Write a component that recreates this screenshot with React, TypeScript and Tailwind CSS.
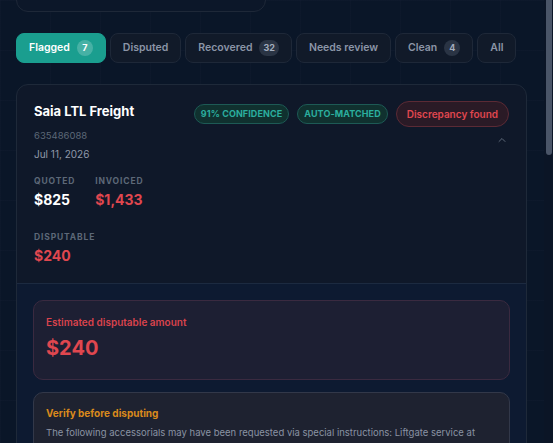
import { ChevronUp } from 'lucide-react'

const tabs = [
  { label: 'Flagged', count: '7', active: true },
  { label: 'Disputed' },
  { label: 'Recovered', count: '32' },
  { label: 'Needs review' },
  { label: 'Clean', count: '4' },
  { label: 'All' },
]

function Tab({ label, count, active }: { label: string; count?: string; active?: boolean }) {
  return (
    <button
      type="button"
      className={`flex h-[30px] items-center gap-[7px] rounded-[8px] border px-[12px] text-[10.5px] font-semibold ${
        active
          ? 'border-[#1a9e8f] bg-[#1a9e8f] text-white'
          : 'border-[#1e2838] bg-[#111a29] text-[#8b95a7]'
      }`}
    >
      {label}
      {count && (
        <span
          className={`flex h-[16px] min-w-[16px] items-center justify-center rounded-full px-[4px] text-[9px] font-bold ${
            active ? 'bg-white/20 text-white' : 'bg-[#2a3444] text-[#a3adbd]'
          }`}
        >
          {count}
        </span>
      )}
    </button>
  )
}

function Pill({ children }: { children: string }) {
  return (
    <span className="rounded-full border border-[#1d5a55] bg-[#10312f] px-[6px] py-[3px] text-[9px] font-bold leading-[12px] tracking-[0.01em] text-[#2bae9e]">
      {children}
    </span>
  )
}

export default function App() {
  return (
    <div
      className="relative h-[443px] overflow-hidden bg-[#0a1628] bg-[linear-gradient(rgba(148,163,184,0.022)_1px,transparent_1px),linear-gradient(90deg,rgba(148,163,184,0.022)_1px,transparent_1px)] bg-[size:50px_50px] text-white"
      style={{ fontFamily: 'Inter, "Noto Sans", sans-serif' }}
    >
      <div className="w-[527px] pl-4">
        <div className="-mt-8 h-[44px] w-[250px] rounded-[12px] border border-[#1e2838] bg-[#0c1729]" />

        <div className="mt-[21px] flex gap-[4px]">
          {tabs.map((t) => (
            <Tab key={t.label} {...t} />
          ))}
        </div>

        <div className="mt-[21px] overflow-hidden rounded-[12px] border border-[#1e2939] bg-[#0f1829]">
          <div className="px-[17px] pt-[16px] pb-[18px]">
            <div className="flex items-start justify-between">
              <div>
                <h2 className="pt-[1px] text-[13px] font-bold leading-[18px] text-white">Saia LTL Freight</h2>
                <p className="mt-[9px] text-[9.5px] leading-[13px] text-[#5d6878]">635486088</p>
                <p className="mt-[5px] text-[10px] leading-[14px] text-[#8f99a9]">Jul 11, 2026</p>
              </div>
              <div className="flex flex-col items-end">
                <div className="flex items-center gap-[8px]">
                  <Pill>91% CONFIDENCE</Pill>
                  <Pill>AUTO-MATCHED</Pill>
                  <span className="rounded-full border border-[#5b2a35] bg-[#2a1a26] px-[10px] py-[5px] text-[10px] font-semibold leading-[14px] text-[#e0474f]">
                    Discrepancy found
                  </span>
                </div>
                <ChevronUp className="mt-[7px] mr-[1px] text-[#5d6878]" size={12} strokeWidth={2} />
              </div>
            </div>

            <div className="mt-[14px] flex gap-[20px]">
              <div>
                <p className="text-[8.5px] font-bold leading-[12px] tracking-[0.1em] text-[#5d6878]">QUOTED</p>
                <p className="mt-[3px] text-[14px] font-bold leading-[19px] text-white">$825</p>
              </div>
              <div>
                <p className="text-[8.5px] font-bold leading-[12px] tracking-[0.1em] text-[#5d6878]">INVOICED</p>
                <p className="mt-[3px] text-[14px] font-bold leading-[19px] text-[#e0474f]">$1,433</p>
              </div>
            </div>

            <div className="mt-[22px]">
              <p className="text-[8.5px] font-bold leading-[12px] tracking-[0.1em] text-[#5d6878]">DISPUTABLE</p>
              <p className="mt-[3px] text-[14px] font-bold leading-[19px] text-[#e0474f]">$240</p>
            </div>
          </div>

          <div className="border-t border-[#1c2a40] bg-[#0d1a31] px-[16px] pt-[16px] pb-[20px]">
            <div className="rounded-[10px] border border-[#3a2a40] bg-[#1d1f33] px-[12px] pt-[14px] pb-[18px]">
              <p className="text-[10px] font-semibold leading-[14px] text-[#d9434d]">Estimated disputable amount</p>
              <p className="mt-[6px] text-[20px] font-bold leading-[26px] text-[#e0474f]">$240</p>
            </div>

            <div className="mt-[12px] rounded-[10px] border border-[#323849] bg-[#1e2230] px-[12px] pt-[13px] pb-[14px]">
              <p className="text-[10px] font-bold leading-[14px] text-[#d98a1c]">Verify before disputing</p>
              <p className="mt-[5px] text-[9.5px] leading-[15px] text-[#8a93a3]">
                The following accessorials may have been requested via special instructions: Liftgate service at
                delivery, Residential delivery. Confirm with the shipper before filing a dispute.
              </p>
            </div>
          </div>
        </div>
      </div>

      {/* scrollbar */}
      <div className="absolute top-0 right-0 h-full w-[9px] bg-[#0b1526]">
        <div className="mx-auto h-[155px] w-[6px] rounded-b-full bg-[#4a5568]" />
      </div>
    </div>
  )
}
